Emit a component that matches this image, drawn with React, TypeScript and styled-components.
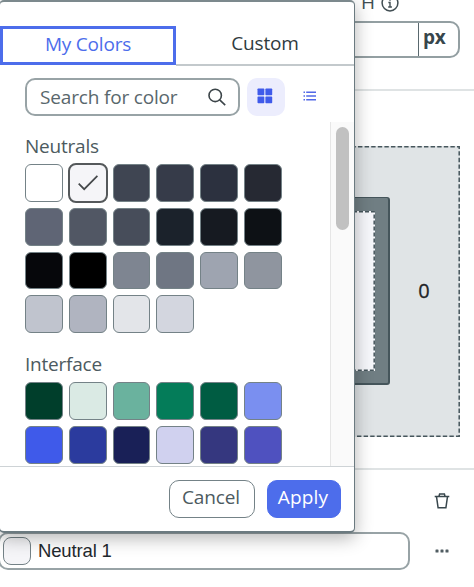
import React from "react";
import styled, { createGlobalStyle, css } from "styled-components";

const GlobalStyle = createGlobalStyle`
  * { box-sizing: border-box; }
  html, body { margin: 0; background: #fff; overflow: hidden; }
  button, input { font: inherit; margin: 0; }
`;

const line = "#748287";
const ink = "#414e53";

const Page = styled.main`
  position: relative;
  width: 474px;
  height: 587px;
  overflow: hidden;
  background: #fff;
  color: ${ink};
  font: 19px/24px "Open Sans", "Noto Sans", sans-serif;
`;

/* ---------- settings panel behind the picker ---------- */

const SizeSection = styled.section`
  height: 91px;
  border-bottom: 2px solid #dfe3e4;
  padding-right: 14px;
  display: flex;
  flex-direction: column;
  align-items: flex-end;
`;

const SizeLabel = styled.div`
  height: 21px;
  width: 99px;
  display: flex;
  align-items: flex-start;
  gap: 6px;
  > span { margin-top: -10px; }
  > svg { margin-top: -6px; }
`;

const SizeField = styled.div`
  width: 160px;
  height: 37px;
  border: 2px solid #939fa2;
  border-radius: 10px;
  display: flex;
  justify-content: flex-end;
`;

const Unit = styled.span`
  width: 40px;
  border-left: 1px solid #59686e;
  padding-left: 4px;
  font-weight: 700;
  font-size: 19px;
  line-height: 28px;
  letter-spacing: -0.2px;
  color: #37464c;
`;

const BoxSection = styled.section`
  height: 379px;
  padding: 55px 14px 0 0;
  display: flex;
  justify-content: flex-end;
  border-bottom: 2px solid #dfe3e4;
`;

const MarginBox = styled.div`
  position: relative;
  width: 300px;
  height: 291px;
  background: #e0e4e6;
  display: flex;
  align-items: center;
`;

const Dashes = styled.svg`
  position: absolute;
  inset: 0;
`;

const BorderBox = styled.div`
  position: relative;
  width: 230px;
  height: 188px;
  margin-top: -1px;
  padding: 13px 13px 12px 0;
  background: #707e83;
  border: 1px solid #45555b;
  border-width: 1px 2px 2px 1px;
  border-radius: 3px;
`;

const Content = styled.div`
  position: relative;
  width: 100%;
  height: 100%;
  background: #f6f7fb;
`;

const MarginValue = styled.span`
  width: 68px;
  margin-top: -2px;
  text-align: center;
  font-size: 20px;
  color: #1f2426;
  -webkit-text-stroke: 0.3px #1f2426;
`;

const ColorSection = styled.section`
  display: grid;
  grid-template-columns: 412px 58px;
  grid-template-rows: 62px 38px;
  margin-left: -2px;
`;

const IconCell = styled.div<{ $column: number }>`
  grid-column: ${(p) => p.$column};
  display: flex;
  align-items: center;
  justify-content: center;
  padding-left: 5px;
`;

const ColorField = styled.div`
  height: 38px;
  border: 2px solid #98a3a6;
  border-radius: 10px;
  display: flex;
  align-items: center;
  gap: 7px;
  padding-left: 3px;
  font: 18.5px/24px "Liberation Sans", Arial, sans-serif;
  letter-spacing: -0.15px;
  color: #1f292d;
`;

const Chip = styled.span`
  width: 28px;
  height: 28px;
  border: 1px solid ${line};
  border-radius: 8px;
  background: #f5f5f8;
`;

/* ---------- colour picker popover ---------- */

const Popover = styled.div`
  position: absolute;
  left: -1px;
  top: 0;
  width: 356px;
  height: 533px;
  border: solid #6b7a80;
  border-width: 2px 1px 2px 1px;
  border-top-color: #7c898d;
  border-radius: 5px;
  background: #fff;
  box-shadow: 0 5px 18px rgba(0, 0, 0, 0.3);
  display: flex;
  flex-direction: column;
  overflow: hidden;
`;

const Tabs = styled.div`
  flex: none;
  height: 64px;
  padding-top: 24px;
  display: flex;
`;

const Tab = styled.button<{ $active?: boolean }>`
  height: 40px;
  flex: ${(p) => (p.$active ? "0 0 176px" : "1")};
  padding: 0 0 3px;
  background: #fff;
  border: 0 solid #c3c9cc;
  border-bottom-width: 2px;
  color: #303b40;
  line-height: 31px;
  letter-spacing: -0.17px;
  ${(p) =>
    p.$active &&
    css`
      border: 3px solid #4d6deb;
      height: 39px;
      color: #4d6deb;
      line-height: 25px;
      letter-spacing: -0.2px;
    `}
`;

const Toolbar = styled.div`
  flex: none;
  height: 56px;
  padding: 12px 0 0 25px;
  display: flex;
`;

const Search = styled.label`
  width: 215px;
  height: 38px;
  border: 2px solid #98a3a6;
  border-radius: 10px;
  padding: 0 12px 0 13px;
  display: flex;
  align-items: center;
  justify-content: space-between;
  svg { flex: none; }
`;

const SearchText = styled.span`
  color: #59676c;
  white-space: nowrap;
  letter-spacing: -0.17px;
`;

const ViewButton = styled.button<{ $active?: boolean }>`
  width: 38px;
  height: 38px;
  margin-left: 7px;
  padding: 0 2px 2px 0;
  border: 0;
  border-radius: 10px;
  background: ${(p) => (p.$active ? "#ecedfd" : "transparent")};
  display: flex;
  align-items: center;
  justify-content: center;
`;

const Scroller = styled.div`
  flex: none;
  height: 344px;
  display: flex;
  justify-content: space-between;
  overflow: hidden;
`;

const Groups = styled.div`
  padding: 12px 0 0 25px;
`;

const Group = styled.section`
  height: 218px;
`;

const GroupTitle = styled.h3`
  margin: 0 0 6px;
  font-size: 19px;
  line-height: 24px;
  font-weight: 400;
  letter-spacing: -0.22px;
  color: #4c5a60;
`;

const Swatches = styled.div`
  display: grid;
  grid-template-columns: repeat(6, 37.8px);
  grid-auto-rows: 37.8px;
  gap: 6px;
`;

const Swatch = styled.button<{ $color: string; $selected?: boolean }>`
  padding: 0;
  border: 1px solid ${line};
  border-radius: 6px;
  background: ${(p) => p.$color};
  display: flex;
  align-items: center;
  justify-content: center;
  ${(p) =>
    p.$selected &&
    css`
      margin: -1px;
      border: 2px solid #55595b;
      border-radius: 8px;
    `}
`;

const Track = styled.div`
  width: 24px;
  padding: 5px 5px 0 5px;
  border-left: 1px solid #e6e6e6;
  background: #fafafa;
`;

const Thumb = styled.div`
  width: 13px;
  height: 103px;
  border-radius: 7px;
  background: #c1c1c1;
`;

const Footer = styled.div`
  flex: 1;
  border-top: 1px solid #ced3d6;
  padding: 13px 13px 0 0;
  display: flex;
  gap: 12px;
  justify-content: flex-end;
  align-items: flex-start;
`;

const Action = styled.button<{ $primary?: boolean }>`
  height: 38px;
  width: ${(p) => (p.$primary ? 74 : 86)}px;
  padding: 0 2px 4px 0;
  border-radius: 10px;
  border: 1px solid ${(p) => (p.$primary ? "#4d6deb" : line)};
  background: ${(p) => (p.$primary ? "#4d6deb" : "#fff")};
  color: ${(p) => (p.$primary ? "#fff" : "#4c5a60")};
  letter-spacing: ${(p) => (p.$primary ? 0.15 : -0.1)}px;
`;

const neutrals = [
  "#ffffff", "#f5f5f8", "#3f4552", "#363b49", "#2c313f", "#262933",
  "#5f6575", "#515764", "#474d5a", "#1b222b", "#161a21", "#0d1115",
  "#06070b", "#000000", "#7e8591", "#6f7683", "#9ea4b0", "#8f959f",
  "#c0c4ce", "#b0b4c0", "#e3e5e9", "#d3d6df",
];

const interfaceColors = [
  "#003e2b", "#daeae4", "#6ab29e", "#047c59", "#005c42", "#7a8ff0",
  "#3f5aea", "#2b3b9e", "#192057", "#d0d1ef", "#35377f", "#4f51bf",
];

const selectedColor = "#f5f5f8";

function InfoIcon() {
  return (
    <svg width="18" height="18" viewBox="0 0 18 18" fill="none" stroke={ink}>
      <circle cx="9" cy="9" r="7.9" strokeWidth="1.5" />
      <path d="M9 5v1.8M7.4 8.5H9V13M7.2 13h3.7" strokeWidth="1.4" />
    </svg>
  );
}

function SearchIcon() {
  return (
    <svg width="18" height="18" viewBox="0 0 18 18" fill="none" stroke="#3c4549" strokeWidth="1.6">
      <circle cx="7.2" cy="7.4" r="6.2" />
      <path d="M11.7 11.9 17.2 17.2" />
    </svg>
  );
}

function GridIcon() {
  return (
    <svg width="16" height="16" viewBox="0 0 16 16" fill="#3f5aea">
      <rect x="0.5" y="0.5" width="6.8" height="6.8" rx="0.7" />
      <rect x="8.4" y="0.5" width="6.8" height="6.8" rx="0.7" />
      <rect x="0.5" y="8.4" width="6.8" height="6.8" rx="0.7" />
      <rect x="8.4" y="8.4" width="6.8" height="6.8" rx="0.7" />
    </svg>
  );
}

function ListIcon() {
  return (
    <svg width="14" height="10" viewBox="0 0 14 10" stroke="#5269e8" strokeWidth="1.5">
      <path d="M0.5 1.2H2M3.2 1.2H13M0.5 5H2M3.2 5H13M0.5 8.8H2M3.2 8.8H13" />
    </svg>
  );
}

function CheckIcon() {
  return (
    <svg width="22" height="18" viewBox="0 0 22 18" fill="none" stroke="#44484a" strokeWidth="1.7">
      <path d="m1.7 9.6 5.5 5.6L20.4 1.8" />
    </svg>
  );
}

function TrashIcon() {
  return (
    <svg width="16" height="18" viewBox="0 0 16 18" fill="none" stroke="#39474d" strokeWidth="1.5">
      <path d="M0.7 4.4h14.6M5 4.2l.6-2.1h4.8l.6 2.1M2.5 4.6l1.6 11.2h7.8l1.6-11.2" />
    </svg>
  );
}

function MoreIcon() {
  return (
    <svg width="14" height="4" viewBox="0 0 14 4" fill="#505d62">
      <rect x="0.5" y="0.5" width="3" height="3" rx="0.6" />
      <rect x="5.5" y="0.5" width="3" height="3" rx="0.6" />
      <rect x="10.5" y="0.5" width="3" height="3" rx="0.6" />
    </svg>
  );
}

function SwatchGroup({ title, colors }: { title: string; colors: string[] }) {
  return (
    <Group>
      <GroupTitle>{title}</GroupTitle>
      <Swatches>
        {colors.map((color) => (
          <Swatch key={color} $color={color} $selected={color === selectedColor} aria-label={color}>
            {color === selectedColor && <CheckIcon />}
          </Swatch>
        ))}
      </Swatches>
    </Group>
  );
}

export default function App() {
  return (
    <Page>
      <GlobalStyle />
      <SizeSection>
        <SizeLabel>
          <span>H</span>
          <InfoIcon />
        </SizeLabel>
        <SizeField>
          <Unit>px</Unit>
        </SizeField>
      </SizeSection>
      <BoxSection>
        <MarginBox>
          <Dashes width="300" height="291" fill="none" stroke="#46565c" strokeWidth="1.5">
            <path d="M0 .8H299.2V290.2H0" strokeDasharray="4.4 2.2" />
          </Dashes>
          <BorderBox>
            <Content>
              <Dashes width="100%" height="100%" viewBox="0 0 214 160" preserveAspectRatio="none" fill="none" stroke="#46565c" strokeWidth="1.5">
                <path d="M0 .8H213.2V159.2H0" strokeDasharray="4 2" />
              </Dashes>
            </Content>
          </BorderBox>
          <MarginValue>0</MarginValue>
        </MarginBox>
      </BoxSection>
      <ColorSection>
        <IconCell $column={2}>
          <TrashIcon />
        </IconCell>
        <ColorField>
          <Chip />
          Neutral 1
        </ColorField>
        <IconCell $column={2}>
          <MoreIcon />
        </IconCell>
      </ColorSection>

      <Popover role="dialog">
        <Tabs>
          <Tab $active>My Colors</Tab>
          <Tab>Custom</Tab>
        </Tabs>
        <Toolbar>
          <Search>
            <SearchText>Search for color</SearchText>
            <SearchIcon />
          </Search>
          <ViewButton $active aria-label="Grid view">
            <GridIcon />
          </ViewButton>
          <ViewButton aria-label="List view">
            <ListIcon />
          </ViewButton>
        </Toolbar>
        <Scroller>
          <Groups>
            <SwatchGroup title="Neutrals" colors={neutrals} />
            <SwatchGroup title="Interface" colors={interfaceColors} />
          </Groups>
          <Track>
            <Thumb />
          </Track>
        </Scroller>
        <Footer>
          <Action>Cancel</Action>
          <Action $primary>Apply</Action>
        </Footer>
      </Popover>
    </Page>
  );
}
